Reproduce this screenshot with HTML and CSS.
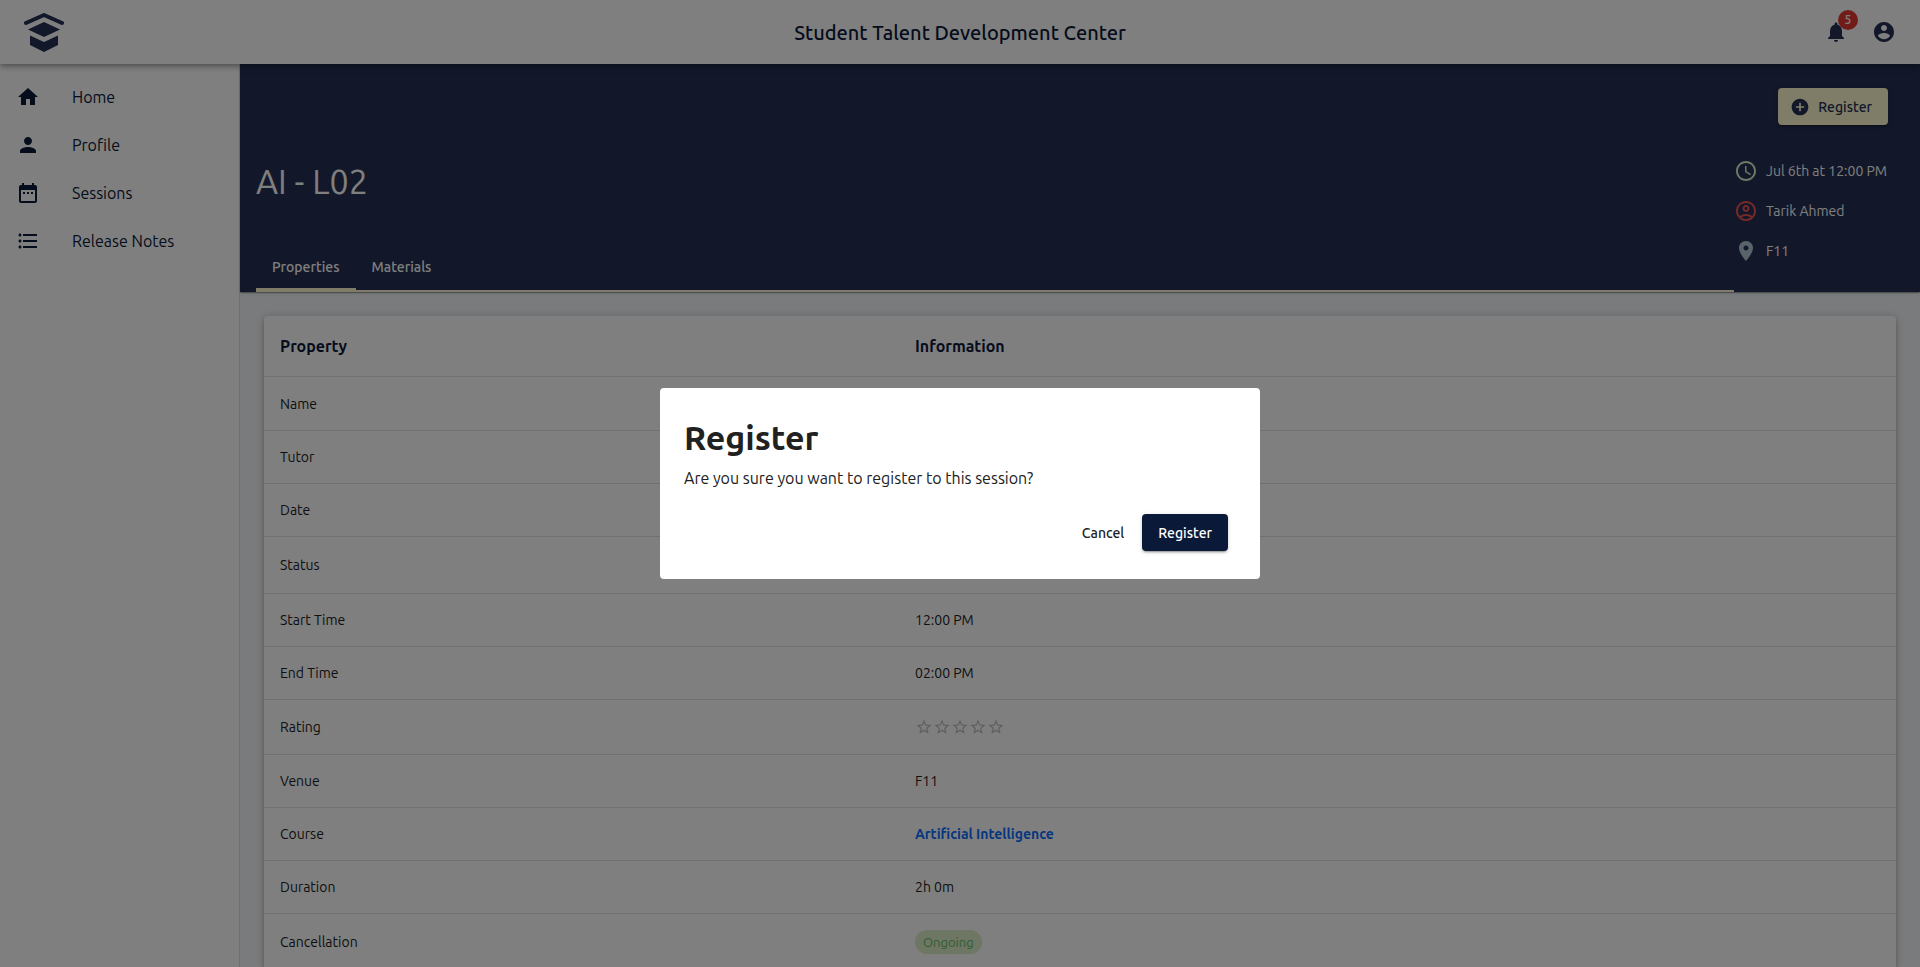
FILE: index.html
```html
<!DOCTYPE html>
<html lang="en">
<head>
<meta charset="utf-8">
<title>Student Talent Development Center</title>
<link rel="stylesheet" href="styles.css">
</head>
<body>
<div class="app">
  <header class="topbar">
    <a class="logo" href="#" aria-label="Student Talent Development Center home">
      <svg viewBox="0 0 40 40" width="40" height="40"><path d="M2 11 20 3l18 8" fill="none" stroke="currentColor" stroke-width="4" stroke-linecap="round" stroke-linejoin="round"/><path d="M20 10 36 17.600 20 25 4 17.600Z"/><path d="M6 23.500 20 30l14-6.500V33L20 40 6 33Z"/></svg>
    </a>
    <h1 class="brand">Student Talent Development Center</h1>
    <div class="actions">
      <button class="icon-button" type="button" aria-label="Notifications">
        <svg class="icon" viewBox="0 0 24 24"><path d="M12 22c1.100 0 2-.9 2-2h-4c0 1.100.89 2 2 2zm6-6v-5c0-3.070-1.640-5.640-4.500-6.320V4c0-.83-.67-1.500-1.500-1.500s-1.500.67-1.500 1.500v.68C7.630 5.360 6 7.920 6 11v5l-2 2v1h16v-1l-2-2z"/></svg>
        <span class="badge">5</span>
      </button>
      <button class="icon-button" type="button" aria-label="Account">
        <svg class="icon" viewBox="0 0 24 24"><path d="M12 2C6.480 2 2 6.480 2 12s4.480 10 10 10 10-4.480 10-10S17.520 2 12 2zm0 3c1.660 0 3 1.340 3 3s-1.340 3-3 3-3-1.340-3-3 1.340-3 3-3zm0 14.200c-2.500 0-4.710-1.280-6-3.220.03-1.990 4-3.080 6-3.080 1.990 0 5.970 1.090 6 3.080-1.290 1.940-3.500 3.220-6 3.220z"/></svg>
      </button>
    </div>
  </header>
  <div class="body">
    <nav class="sidebar" aria-label="Main">
      <a class="nav-item" href="#"><svg class="icon" viewBox="0 0 24 24"><path d="M10 20v-6h4v6h5v-8h3L12 3 2 12h3v8z"/></svg>Home</a>
      <a class="nav-item" href="#"><svg class="icon" viewBox="0 0 24 24"><path d="M12 12c2.210 0 4-1.790 4-4s-1.790-4-4-4-4 1.790-4 4 1.790 4 4 4zm0 2c-2.670 0-8 1.340-8 4v2h16v-2c0-2.660-5.330-4-8-4z"/></svg>Profile</a>
      <a class="nav-item" href="#"><svg class="icon" viewBox="0 0 24 24"><path d="M9 11H7v2h2v-2zm4 0h-2v2h2v-2zm4 0h-2v2h2v-2zm2-7h-1V2h-2v2H8V2H6v2H5c-1.110 0-1.990.9-1.990 2L3 20c0 1.100.89 2 2 2h14c1.100 0 2-.9 2-2V6c0-1.100-.9-2-2-2zm0 16H5V9h14v11z"/></svg>Sessions</a>
      <a class="nav-item" href="#"><svg class="icon" viewBox="0 0 24 24"><path d="M4 10.500c-.83 0-1.500.67-1.500 1.500s.67 1.500 1.500 1.500 1.500-.67 1.500-1.500-.67-1.500-1.500-1.500zm0-6c-.83 0-1.500.67-1.500 1.500S3.170 7.500 4 7.500 5.500 6.830 5.500 6 4.830 4.500 4 4.500zm0 12c-.83 0-1.500.68-1.500 1.500s.68 1.500 1.500 1.500 1.500-.68 1.500-1.500-.67-1.500-1.500-1.500zM7 19h14v-2H7v2zm0-6h14v-2H7v2zm0-8v2h14V5H7z"/></svg>Release Notes</a>
    </nav>
    <main class="main">
      <section class="hero">
        <div class="hero-left">
          <h2 class="hero-title">AI - L02</h2>
          <div class="tabs" role="tablist">
            <button class="tab tab-active" type="button" role="tab" aria-selected="true">Properties</button>
            <button class="tab" type="button" role="tab" aria-selected="false">Materials</button>
          </div>
        </div>
        <div class="hero-right">
          <button class="button button-gold" type="button"><svg class="button-icon" viewBox="0 0 24 24"><path d="M12 2C6.480 2 2 6.480 2 12s4.480 10 10 10 10-4.480 10-10S17.520 2 12 2zm5 11h-4v4h-2v-4H7v-2h4V7h2v4h4v2z"/></svg>Register</button>
          <ul class="facts">
            <li class="fact"><svg class="icon icon-time" viewBox="0 0 24 24"><path d="M11.990 2C6.470 2 2 6.480 2 12s4.470 10 9.990 10C17.520 22 22 17.520 22 12S17.520 2 11.990 2zM12 20c-4.420 0-8-3.580-8-8s3.580-8 8-8 8 3.580 8 8-3.580 8-8 8zM12.500 7H11v6l5.250 3.150.75-1.230-4.500-2.670z"/></svg>Jul 6th at 12:00 PM</li>
            <li class="fact"><svg class="icon icon-person" viewBox="0 0 24 24"><path fill-rule="evenodd" d="M12 2C6.480 2 2 6.480 2 12s4.480 10 10 10 10-4.480 10-10S17.520 2 12 2zM7.350 18.500C8.660 17.560 10.260 17 12 17s3.340.56 4.650 1.500C15.340 19.440 13.740 20 12 20s-3.340-.56-4.650-1.500zm10.790-1.380C16.450 15.800 14.320 15 12 15s-4.450.8-6.140 2.120C4.700 15.730 4 13.950 4 12c0-4.420 3.580-8 8-8s8 3.580 8 8c0 1.950-.7 3.730-1.860 5.120zM12 6c-1.930 0-3.500 1.570-3.500 3.500S10.070 13 12 13s3.500-1.570 3.500-3.500S13.930 6 12 6zm0 5c-.83 0-1.500-.67-1.500-1.500S11.170 8 12 8s1.500.67 1.500 1.500S12.830 11 12 11z"/></svg>Tarik Ahmed</li>
            <li class="fact"><svg class="icon icon-place" viewBox="0 0 24 24"><path d="M12 2C8.130 2 5 5.130 5 9c0 5.250 7 13 7 13s7-7.750 7-13c0-3.870-3.130-7-7-7zm0 9.500c-1.380 0-2.500-1.120-2.500-2.500s1.120-2.500 2.500-2.500 2.500 1.120 2.500 2.500-1.120 2.500-2.500 2.500z"/></svg>F11</li>
          </ul>
        </div>
      </section>
      <section class="card">
        <table class="table">
          <thead><tr><th class="col-property" scope="col">Property</th><th scope="col">Information</th></tr></thead>
          <tbody>
            <tr class="row-first"><td>Name</td><td></td></tr>
            <tr><td>Tutor</td><td></td></tr>
            <tr><td>Date</td><td></td></tr>
            <tr class="row-chip"><td>Status</td><td></td></tr>
            <tr><td>Start Time</td><td>12:00 PM</td></tr>
            <tr><td>End Time</td><td>02:00 PM</td></tr>
            <tr class="row-rating"><td>Rating</td><td><div class="stars" role="img" aria-label="No rating">
              <svg class="star" viewBox="0 0 24 24"><path d="M22 9.240l-7.190-.62L12 2 9.190 8.630 2 9.240l5.460 4.730L5.820 21 12 17.270 18.180 21l-1.630-7.030L22 9.240zM12 15.400l-3.760 2.270 1-4.280-3.320-2.880 4.380-.38L12 6.100l1.710 4.040 4.380.38-3.320 2.880 1 4.280L12 15.400z"/></svg>
              <svg class="star" viewBox="0 0 24 24"><path d="M22 9.240l-7.190-.62L12 2 9.190 8.630 2 9.240l5.460 4.730L5.820 21 12 17.270 18.180 21l-1.630-7.030L22 9.240zM12 15.400l-3.760 2.270 1-4.280-3.320-2.880 4.380-.38L12 6.100l1.710 4.040 4.380.38-3.320 2.880 1 4.280L12 15.400z"/></svg>
              <svg class="star" viewBox="0 0 24 24"><path d="M22 9.240l-7.190-.62L12 2 9.190 8.630 2 9.240l5.460 4.730L5.820 21 12 17.270 18.180 21l-1.630-7.030L22 9.240zM12 15.400l-3.760 2.270 1-4.280-3.320-2.880 4.380-.38L12 6.100l1.710 4.040 4.380.38-3.320 2.880 1 4.280L12 15.400z"/></svg>
              <svg class="star" viewBox="0 0 24 24"><path d="M22 9.240l-7.190-.62L12 2 9.190 8.630 2 9.240l5.460 4.730L5.820 21 12 17.270 18.180 21l-1.630-7.030L22 9.240zM12 15.400l-3.760 2.270 1-4.280-3.320-2.880 4.380-.38L12 6.100l1.710 4.040 4.380.38-3.320 2.880 1 4.280L12 15.400z"/></svg>
              <svg class="star" viewBox="0 0 24 24"><path d="M22 9.240l-7.190-.62L12 2 9.190 8.630 2 9.240l5.460 4.730L5.820 21 12 17.270 18.180 21l-1.630-7.030L22 9.240zM12 15.400l-3.760 2.270 1-4.280-3.320-2.880 4.380-.38L12 6.100l1.710 4.040 4.380.38-3.320 2.880 1 4.280L12 15.400z"/></svg>
            </div></td></tr>
            <tr><td>Venue</td><td>F11</td></tr>
            <tr><td>Course</td><td><a class="course-link" href="#">Artificial Intelligence</a></td></tr>
            <tr><td>Duration</td><td>2h 0m</td></tr>
            <tr class="row-chip"><td>Cancellation</td><td><span class="chip">Ongoing</span></td></tr>
          </tbody>
        </table>
      </section>
    </main>
  </div>
</div>
<div class="backdrop">
  <div class="dialog" role="dialog" aria-modal="true" aria-labelledby="dialog-title">
    <h2 class="dialog-title" id="dialog-title">Register</h2>
    <p class="dialog-text">Are you sure you want to register to this session?</p>
    <div class="dialog-actions">
      <button class="button button-text" type="button">Cancel</button>
      <button class="button button-navy" type="button">Register</button>
    </div>
  </div>
</div>
</body>
</html>
```
FILE: styles.css
```css
* { box-sizing: border-box; }

body {
  margin: 0;
  font-family: Ubuntu, "Noto Sans", sans-serif;
  font-size: 14px;
  line-height: 20px;
  color: #212121;
}

h1, h2, p, ul { margin: 0; padding: 0; }
button { font-family: inherit; border: 0; margin: 0; cursor: pointer; }

.app {
  height: 100vh;
  display: flex;
  flex-direction: column;
  overflow: hidden;
  background: #f4f6f8;
}

.icon { width: 24px; height: 24px; flex: none; fill: currentColor; display: block; }

.topbar {
  position: relative;
  z-index: 2;
  display: grid;
  grid-template-columns: 1fr auto 1fr;
  align-items: center;
  flex: none;
  height: 64px;
  padding: 0 24px;
  background: #fff;
  color: #243054;
  box-shadow: 0 2px 4px -1px rgba(0,0,0,.2), 0 4px 5px rgba(0,0,0,.14), 0 1px 10px rgba(0,0,0,.12);
}
.logo { justify-self: start; color: inherit; }
.logo svg { display: block; fill: currentColor; }
.brand { padding-top: 2px; font-size: 20px; line-height: 32px; font-weight: 500; color: #0a1938; }
.actions { justify-self: end; display: flex; gap: 24px; }
.icon-button { position: relative; padding: 0; background: none; color: inherit; }
.badge {
  position: absolute;
  top: -10px;
  right: -10px;
  width: 20px;
  height: 20px;
  border-radius: 10px;
  background: #e53935;
  color: #fff;
  font-size: 12px;
  line-height: 20px;
  font-weight: 500;
  text-align: center;
}

.body { flex: 1; min-height: 0; display: flex; }

.sidebar {
  flex: none;
  width: 240px;
  padding-top: 9px;
  background: #fff;
  border-right: 1px solid #e0e0e0;
}
.nav-item {
  display: flex;
  align-items: center;
  gap: 32px;
  height: 48px;
  padding: 0 16px;
  font-size: 16px;
  line-height: 24px;
  color: #0a1938;
  text-decoration: none;
}

.main { flex: 1; min-width: 0; display: flex; flex-direction: column; }

.hero {
  position: relative;
  flex: none;
  display: flex;
  padding: 24px 32px 0 16px;
  background: #243054;
  color: #fff;
  box-shadow: 0 2px 1px -1px rgba(0,0,0,.2), 0 1px 1px rgba(0,0,0,.14), 0 1px 3px rgba(0,0,0,.12);
}
.hero-left { flex: 1; display: flex; flex-direction: column; }
.hero-title {
  flex: 1;
  display: flex;
  align-items: center;
  padding-top: 30px;
  font-size: 34px;
  line-height: 42px;
  font-weight: 400;
}
.tabs { display: flex; border-bottom: 2px solid #fff4d2; }
.tab {
  height: 48px;
  margin-bottom: -2px;
  padding: 2px 16px 0;
  background: none;
  color: #fff;
  font-size: 14px;
  font-weight: 500;
  border-bottom: 4px solid transparent;
}
.tab-active { border-bottom-color: #fff8d0; }
.hero-right {
  display: flex;
  flex-direction: column;
  align-items: flex-end;
  min-width: 154px;
  padding-bottom: 21px;
}
.facts { align-self: stretch; margin-top: 26px; list-style: none; }
.fact { display: flex; align-items: center; gap: 8px; height: 40px; }
.icon-time { color: #dcedc8; }
.icon-person { color: #ef5350; }
.icon-place { color: #b0c8d4; }

.button {
  display: flex;
  align-items: center;
  justify-content: center;
  height: 37px;
  padding: 0 16px;
  border-radius: 4px;
  font-size: 14px;
  line-height: 24px;
  font-weight: 500;
}
.button-gold {
  gap: 8px;
  padding-left: 12px;
  background: #fff8d0;
  color: #243054;
  box-shadow: 0 3px 1px -2px rgba(0,0,0,.2), 0 2px 2px rgba(0,0,0,.14), 0 1px 5px rgba(0,0,0,.12);
}
.button-icon { width: 20px; height: 20px; fill: currentColor; }

.card {
  flex: 1;
  margin: 24px 24px 0;
  background: #fff;
  border-radius: 4px;
  box-shadow: 0 3px 3px -2px rgba(0,0,0,.2), 0 3px 4px rgba(0,0,0,.14), 0 1px 8px rgba(0,0,0,.2);
}
.table { width: 100%; border-collapse: separate; border-spacing: 0; table-layout: fixed; }
.table th, .table td {
  height: 53px;
  padding: 0 16px;
  border-bottom: 1px solid #e0e0e0;
  text-align: left;
}
.table th { height: 61px; font-size: 16px; font-weight: 700; color: #0a1938; }
.table .col-property { width: 635px; }
.table .row-first td { height: 54px; }
.table .row-chip td { height: 57px; }
.table .row-rating td { height: 55px; }
.stars { display: flex; }
.star { width: 18px; height: 18px; fill: #bdbdbd; }
.course-link { color: #0d6efd; font-weight: 700; text-decoration: none; }
.chip {
  display: inline-block;
  padding: 0 8px;
  border-radius: 12px;
  background: #dcedc8;
  color: #66bb6a;
  font-size: 13px;
  line-height: 24px;
}

.backdrop {
  position: fixed;
  inset: 0;
  z-index: 10;
  display: flex;
  align-items: center;
  justify-content: center;
  background: rgba(0,0,0,.5);
}
.dialog {
  width: 600px;
  max-width: 90%;
  padding: 28px 24px;
  background: #fff;
  border-radius: 4px;
}
.dialog-title { font-size: 34px; line-height: 42px; font-weight: 700; }
.dialog-text { margin-top: 8px; font-size: 16px; line-height: 24px; }
.dialog-actions { display: flex; justify-content: flex-end; gap: 2px; margin-top: 24px; padding-right: 8px; }
.button-text { background: none; color: #212121; }
.button-navy {
  background: #0a1938;
  color: #fff;
  box-shadow: 0 3px 1px -2px rgba(0,0,0,.2), 0 2px 2px rgba(0,0,0,.14), 0 1px 5px rgba(0,0,0,.12);
}
```
